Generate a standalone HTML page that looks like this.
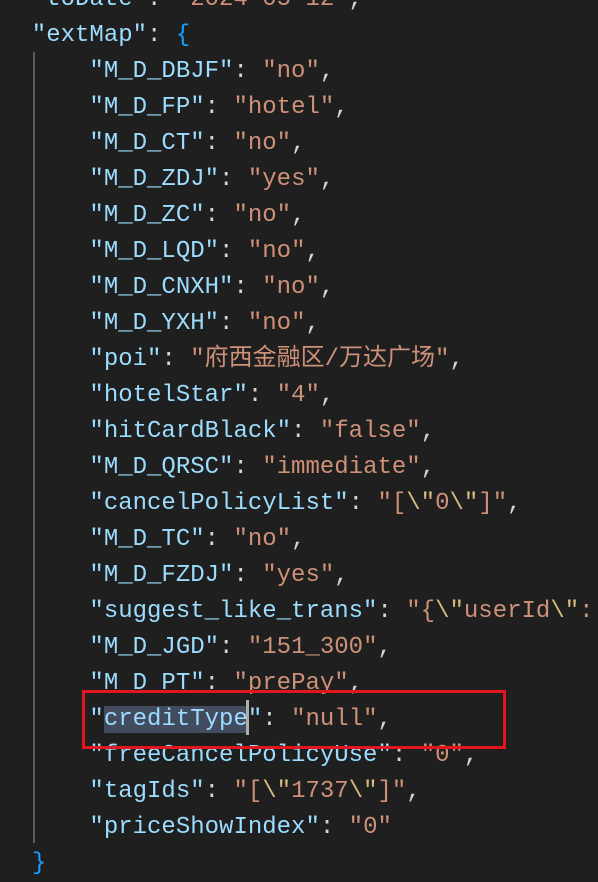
<!DOCTYPE html>
<html><head><meta charset="utf-8"><style>
html,body{margin:0;padding:0;background:#1f1f1f;width:598px;height:864px;overflow:hidden}
#c{position:absolute;left:3px;top:-18px;font-family:"Liberation Mono","Noto Sans CJK SC",monospace;font-size:24px;line-height:36px;white-space:pre;color:#d4d4d4}
.k{color:#9cdcfe}.s{color:#ce9178}.e{color:#d7ba7d}.b{color:#179fff}
.sel{background:#434c5e}
#g{position:absolute;left:33px;top:52px;width:2px;height:791px;background:#5a5a5a}
#r{position:absolute;left:82px;top:690px;width:418px;height:53px;border:3px solid #e2161f}
#cur{position:absolute;left:246px;top:700px;width:3px;height:35px;background:#aeafad}
</style></head><body>
<div id="g"></div>
<div id="c"><span class="k">  "toDate"</span>: <span class="s">"2024-05-12"</span>,
<span class="k">  "extMap"</span>: <span class="b">{</span>
<span class="k">      "M_D_DBJF"</span>: <span class="s">"no"</span>,
<span class="k">      "M_D_FP"</span>: <span class="s">"hotel"</span>,
<span class="k">      "M_D_CT"</span>: <span class="s">"no"</span>,
<span class="k">      "M_D_ZDJ"</span>: <span class="s">"yes"</span>,
<span class="k">      "M_D_ZC"</span>: <span class="s">"no"</span>,
<span class="k">      "M_D_LQD"</span>: <span class="s">"no"</span>,
<span class="k">      "M_D_CNXH"</span>: <span class="s">"no"</span>,
<span class="k">      "M_D_YXH"</span>: <span class="s">"no"</span>,
<span class="k">      "poi"</span>: <span class="s">"府西金融区/万达广场"</span>,
<span class="k">      "hotelStar"</span>: <span class="s">"4"</span>,
<span class="k">      "hitCardBlack"</span>: <span class="s">"false"</span>,
<span class="k">      "M_D_QRSC"</span>: <span class="s">"immediate"</span>,
<span class="k">      "cancelPolicyList"</span>: <span class="s">"[<span class="e">\"</span>0<span class="e">\"</span>]"</span>,
<span class="k">      "M_D_TC"</span>: <span class="s">"no"</span>,
<span class="k">      "M_D_FZDJ"</span>: <span class="s">"yes"</span>,
<span class="k">      "suggest_like_trans"</span>: <span class="s">"{<span class="e">\"</span>userId<span class="e">\"</span>:</span>
<span class="k">      "M_D_JGD"</span>: <span class="s">"151_300"</span>,
<span class="k">      "M_D_PT"</span>: <span class="s">"prePay"</span>,
<span class="k">      "<span class="sel">creditType</span>"</span>: <span class="s">"null"</span>,
<span class="k">      "freeCancelPolicyUse"</span>: <span class="s">"0"</span>,
<span class="k">      "tagIds"</span>: <span class="s">"[<span class="e">\"</span>1737<span class="e">\"</span>]"</span>,
<span class="k">      "priceShowIndex"</span>: <span class="s">"0"</span>
  <span class="b">}</span></div>
<div id="cur"></div>
<div id="r"></div>
</body></html>
